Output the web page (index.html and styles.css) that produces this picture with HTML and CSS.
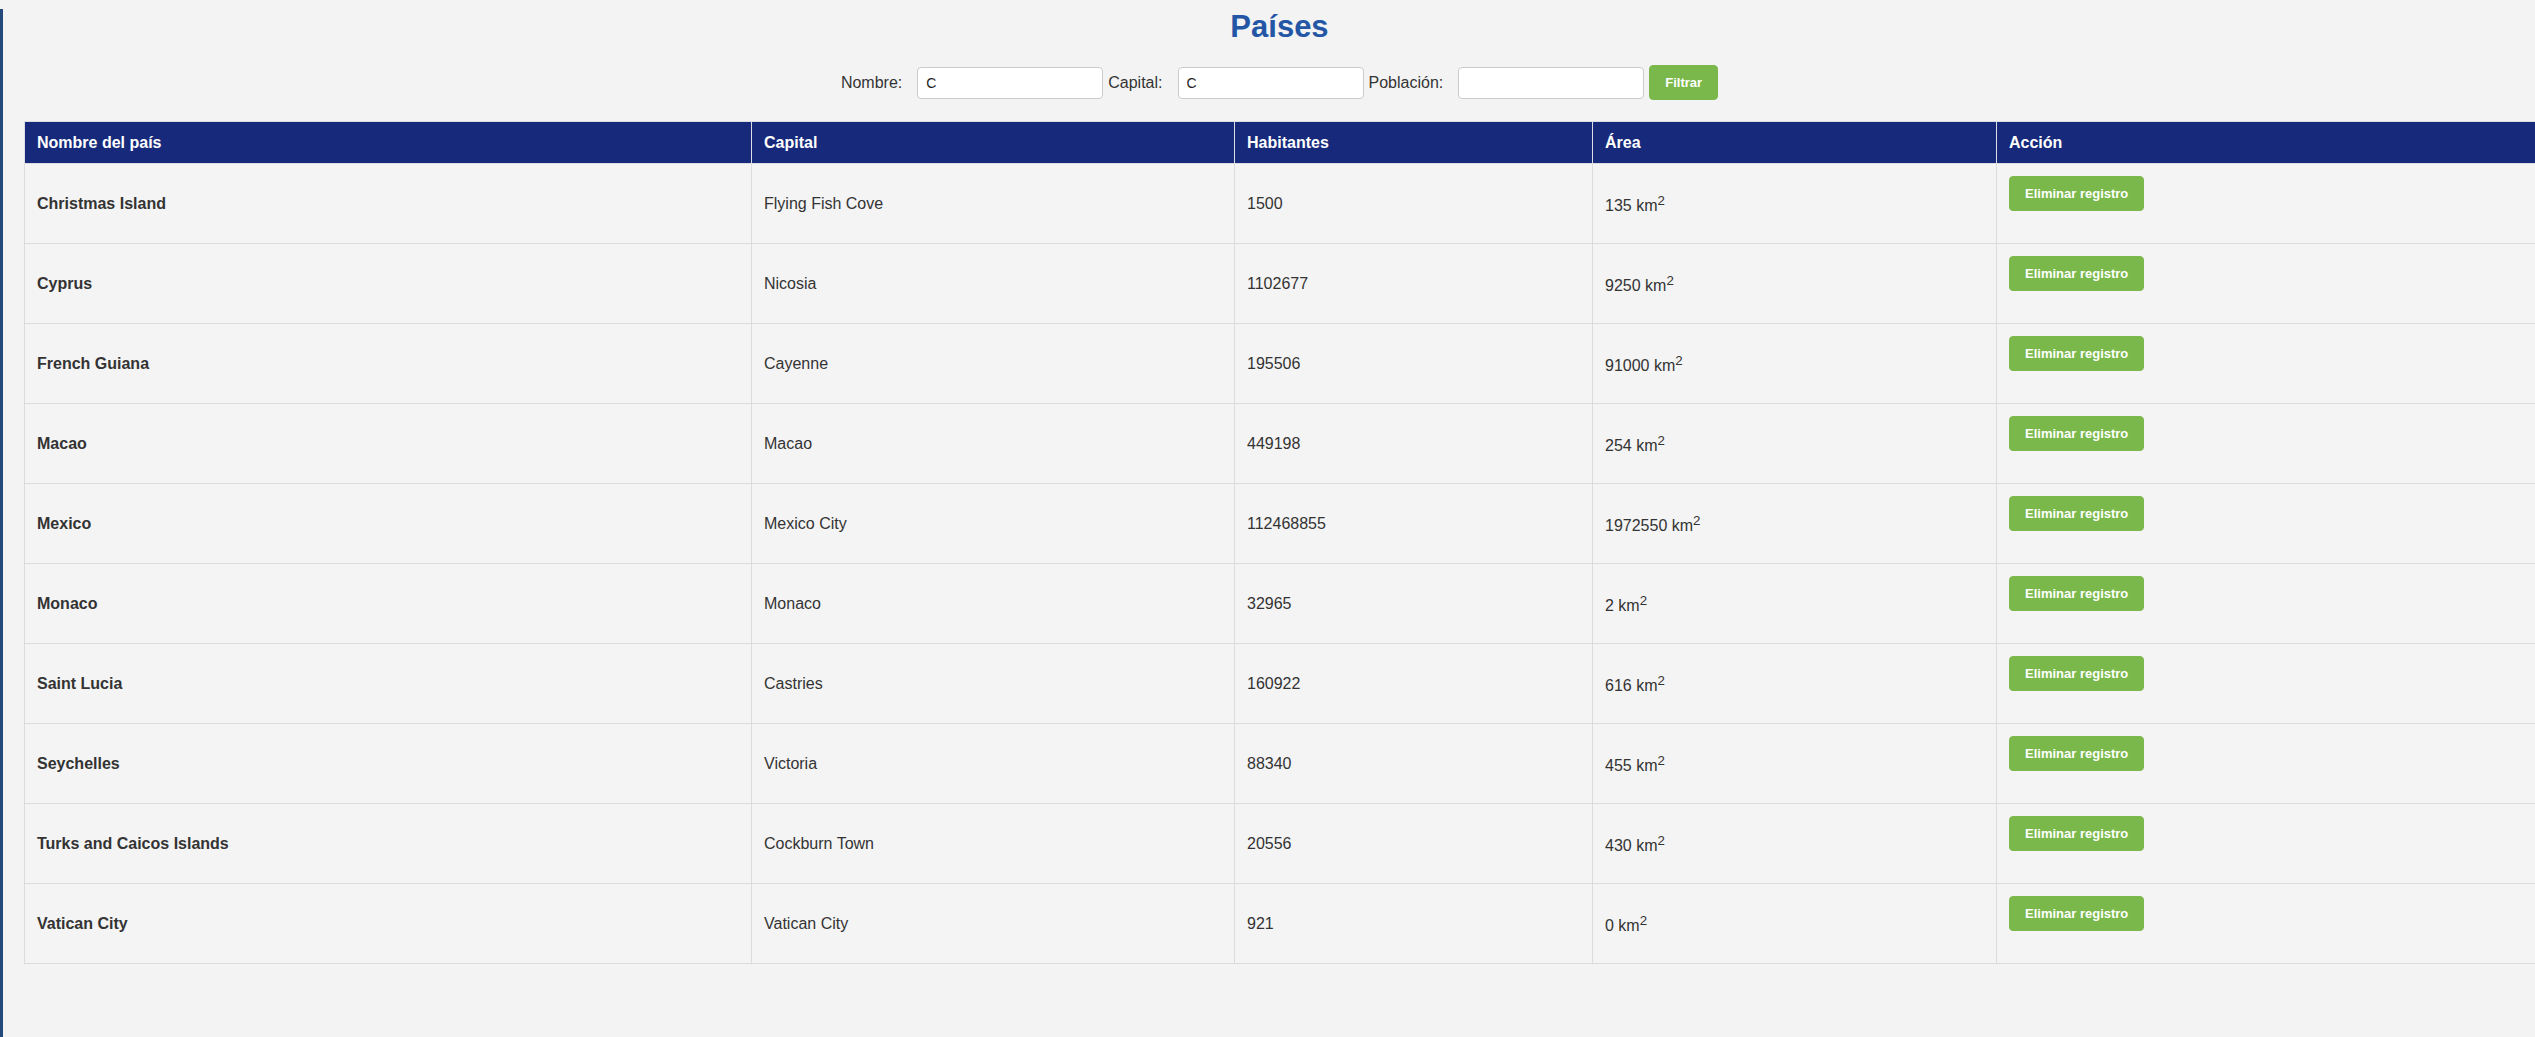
FILE: index.html
```html
<!DOCTYPE html>
<html lang="es">
<head>
<meta charset="utf-8">
<title>Países</title>
<link rel="stylesheet" href="styles.css">
</head>
<body>
<div class="app">
  <h1 class="title">Países</h1>
  <form class="filters" onsubmit="return false;">
    <label class="filter-label" for="f-nombre">Nombre:</label>
    <input class="filter-input" id="f-nombre" type="text" value="C">
    <label class="filter-label" for="f-capital">Capital:</label>
    <input class="filter-input" id="f-capital" type="text" value="C">
    <label class="filter-label" for="f-poblacion">Población:</label>
    <input class="filter-input" id="f-poblacion" type="text" value="">
    <button class="btn" type="submit">Filtrar</button>
  </form>
  <table class="countries">
    <colgroup>
      <col class="c-name"><col class="c-capital"><col class="c-pop"><col class="c-area"><col class="c-action">
    </colgroup>
    <thead>
      <tr><th>Nombre del país</th><th>Capital</th><th>Habitantes</th><th>Área</th><th>Acción</th></tr>
    </thead>
    <tbody>
      <tr><td class="name">Christmas Island</td><td>Flying Fish Cove</td><td>1500</td><td>135 km<sup>2</sup></td><td class="action"><button class="btn">Eliminar registro</button></td></tr>
      <tr><td class="name">Cyprus</td><td>Nicosia</td><td>1102677</td><td>9250 km<sup>2</sup></td><td class="action"><button class="btn">Eliminar registro</button></td></tr>
      <tr><td class="name">French Guiana</td><td>Cayenne</td><td>195506</td><td>91000 km<sup>2</sup></td><td class="action"><button class="btn">Eliminar registro</button></td></tr>
      <tr><td class="name">Macao</td><td>Macao</td><td>449198</td><td>254 km<sup>2</sup></td><td class="action"><button class="btn">Eliminar registro</button></td></tr>
      <tr><td class="name">Mexico</td><td>Mexico City</td><td>112468855</td><td>1972550 km<sup>2</sup></td><td class="action"><button class="btn">Eliminar registro</button></td></tr>
      <tr><td class="name">Monaco</td><td>Monaco</td><td>32965</td><td>2 km<sup>2</sup></td><td class="action"><button class="btn">Eliminar registro</button></td></tr>
      <tr><td class="name">Saint Lucia</td><td>Castries</td><td>160922</td><td>616 km<sup>2</sup></td><td class="action"><button class="btn">Eliminar registro</button></td></tr>
      <tr><td class="name">Seychelles</td><td>Victoria</td><td>88340</td><td>455 km<sup>2</sup></td><td class="action"><button class="btn">Eliminar registro</button></td></tr>
      <tr><td class="name">Turks and Caicos Islands</td><td>Cockburn Town</td><td>20556</td><td>430 km<sup>2</sup></td><td class="action"><button class="btn">Eliminar registro</button></td></tr>
      <tr><td class="name">Vatican City</td><td>Vatican City</td><td>921</td><td>0 km<sup>2</sup></td><td class="action"><button class="btn">Eliminar registro</button></td></tr>
    </tbody>
  </table>
</div>
</body>
</html>
```

FILE: styles.css
```css
html, body {
  margin: 0;
  padding: 0;
  background: #f3f3f3;
}

body {
  font-family: "Liberation Sans", Arial, sans-serif;
  font-size: 16px;
  color: #333;
  overflow-x: hidden;
}

.app {
  border-left: 3px solid #24497b;
  padding-left: 21px;
  min-height: 100vh;
  box-sizing: border-box;
}

.title {
  margin: 9px 0 20px;
  font-size: 31px;
  line-height: 36px;
  font-weight: bold;
  color: #2456a6;
  text-align: center;
}

.filters {
  display: flex;
  justify-content: center;
  align-items: center;
  margin: 0 0 21px;
  height: 35px;
}

.filter-label {
  font-size: 16px;
  color: #333;
  margin-right: 15px;
}

.filter-input {
  box-sizing: border-box;
  width: 186px;
  height: 32px;
  margin: 0 5px 0 0;
  padding: 0 8px;
  border: 1px solid #ccc;
  border-radius: 4px;
  background: #fff;
  font-family: "Liberation Sans", Arial, sans-serif;
  font-size: 14px;
  color: #222;
}

.btn {
  box-sizing: border-box;
  height: 35px;
  padding: 0 15px;
  border: 1px solid #7ab84b;
  border-radius: 4px;
  background: #7ab84b;
  color: #fff;
  font-family: "Liberation Sans", Arial, sans-serif;
  font-size: 13px;
  font-weight: bold;
  line-height: 15px;
  cursor: pointer;
}

.countries {
  width: calc(100% + 2px);
  table-layout: fixed;
  border-collapse: collapse;
  font-size: 16px;
}

.c-name { width: 727px; }
.c-capital { width: 483px; }
.c-pop { width: 358px; }
.c-area { width: 404px; }

.countries th {
  background: #16297a;
  color: #fff;
  font-weight: bold;
  text-align: left;
  padding: 12px;
  line-height: 17px;
  border: 1px solid #dcdde3;
}

.countries td {
  padding: 12px;
  line-height: 18px;
  border: 1px solid #dcdcdc;
  vertical-align: middle;
  background: #f4f4f4;
}

.countries td.name {
  font-weight: bold;
}

.countries td.action {
  vertical-align: top;
}

.countries td.action .btn {
  display: block;
  margin-bottom: 20px;
}
```
